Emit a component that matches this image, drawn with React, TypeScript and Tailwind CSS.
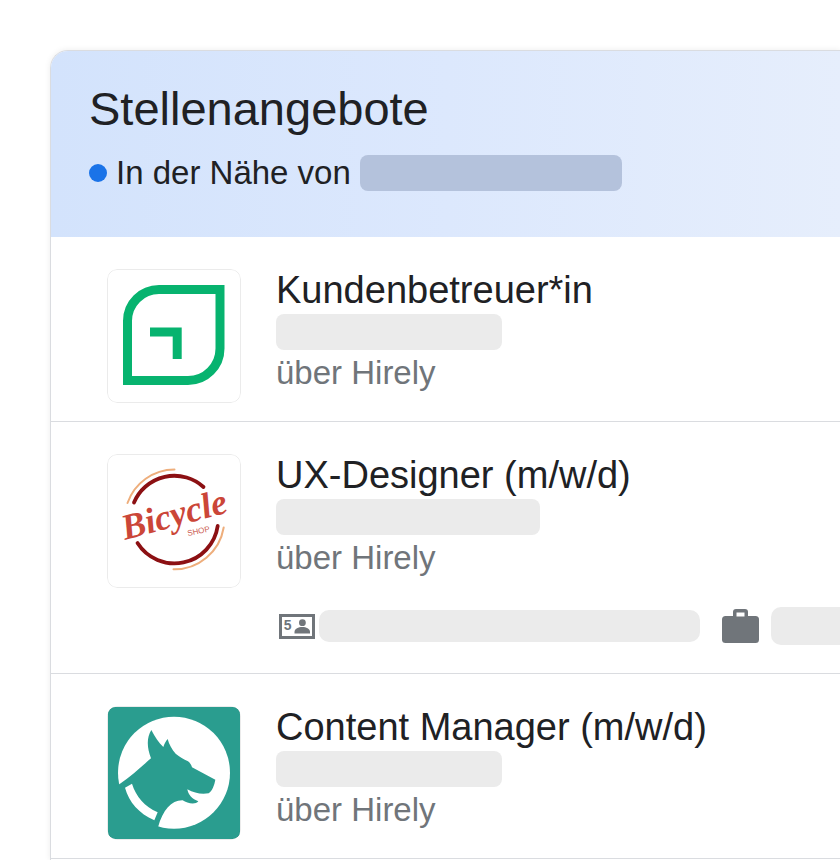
import type { ReactNode } from "react";

interface Job {
  title: string;
  source: string;
  companyWidth: string;
  logo: ReactNode;
  hasDetails?: boolean;
}

function LeafLogo() {
  return (
    <svg viewBox="0 0 134 134" className="size-full" fill="none" stroke="#07b36f" strokeWidth="9" aria-hidden="true">
      <path d="M113 20.5H52A31.5 31.5 0 0 0 20.5 52V111.5H81A32 32 0 0 0 113 79.5Z" />
      <path d="M43 63H70.2V90" />
    </svg>
  );
}

function BicycleLogo() {
  return (
    <svg viewBox="0 0 134 134" className="size-full" fill="none" strokeLinecap="round" aria-hidden="true">
      <g stroke="#8c1013" strokeWidth="3.8">
        <path d="M27 48.5A43.7 43.7 0 0 1 96.5 33" />
        <path d="M30.5 89A43.7 43.7 0 0 0 110.7 72" />
      </g>
      <g stroke="#eeae7c" strokeWidth="2">
        <path d="M20.5 49A50 50 0 0 1 67.5 15.5" />
        <path d="M66.5 115.3A50 50 0 0 0 116.7 73.5" />
      </g>
      <text
        transform="translate(18 86) rotate(-15)"
        className="font-['Liberation_Serif',serif] text-[36px] font-bold italic"
        fill="#cb4638"
      >
        Bicycle
      </text>
      <text
        transform="translate(81 82) rotate(-12)"
        className="font-['Liberation_Sans',sans-serif] text-[8px]"
        fill="#cb5a50"
      >
        SHOP
      </text>
    </svg>
  );
}

function DogLogo() {
  return (
    <svg viewBox="36 33 402 402" className="size-full" aria-hidden="true">
      <rect x="39" y="36" width="396" height="396" rx="22" fill="#2a9d8f" />
      <circle cx="237" cy="233" r="168" fill="#fff" />
      <path
        fill="#2a9d8f"
        d="M60 275L75 266C108 244 136 218 168 190C156 158 154 130 169 105C180 126 191 143 205 156C208 147 212 139 218 132C222 148 231 164 242 176C254 186 266 193 279 199C286 204 289 210 291 217L361 254C358 271 352 287 341 295C318 299 298 294 277 283C279 298 292 313 310 319C302 330 277 326 263 316C230 315 204 344 189 397L185 420H60Z"
      />
      <path fill="#fff" d="M90 278L111 266C123 305 149 334 188 352L178 376C132 355 102 322 90 278Z" />
    </svg>
  );
}

function ContactCardIcon() {
  return (
    <svg viewBox="0 0 36 25" className="ml-[3px] h-[25px] w-9 shrink-0" aria-hidden="true">
      <rect x="1.5" y="1.5" width="33" height="22" fill="#fff" stroke="#70757a" strokeWidth="3" />
      <path d="M15.5 19.5V18C15.5 14.5 19.5 13 23.3 13S31 14.5 31 18V19.5Z" fill="#70757a" />
      <circle cx="23.4" cy="8.7" r="3.4" fill="#70757a" />
      <text x="4.8" y="16" className="font-['Liberation_Sans',sans-serif] text-[14px] font-bold" fill="#70757a">
        5
      </text>
    </svg>
  );
}

function BriefcaseIcon() {
  return (
    <svg viewBox="0 0 37 34" className="h-[34px] w-[37px] shrink-0" fill="#70757a" aria-hidden="true">
      <rect y="7" width="37" height="27" rx="3.5" />
      <path d="M14 0H23Q26 0 26 3V9H11V3Q11 0 14 0Z" />
      <path d="M14.5 3.5H22.5V7.5H14.5Z" fill="#fff" />
    </svg>
  );
}

const jobs: Job[] = [
  {
    title: "Kundenbetreuer*in",
    source: "über Hirely",
    companyWidth: "w-[226px]",
    logo: <LeafLogo />,
  },
  {
    title: "UX-Designer (m/w/d)",
    source: "über Hirely",
    companyWidth: "w-[264px]",
    logo: <BicycleLogo />,
    hasDetails: true,
  },
  {
    title: "Content Manager (m/w/d)",
    source: "über Hirely",
    companyWidth: "w-[226px]",
    logo: <DogLogo />,
  },
];

function JobRow({ job }: { job: Job }) {
  return (
    <li className="flex gap-[35px] border-b border-[#dadce0] pt-8 pb-[18px] pl-14">
      <div className="relative size-[134px] shrink-0 overflow-hidden rounded-[10px]">
        {job.logo}
        <div className="absolute inset-0 rounded-[10px] border border-black/8" />
      </div>
      <div className="flex min-w-0 flex-1 flex-col gap-[3px]">
        <h2 className="text-[38px] leading-[42px] whitespace-nowrap text-[#202124]">{job.title}</h2>
        <div className={`h-9 rounded-lg bg-[#ebebeb] ${job.companyWidth}`} />
        <p className="text-[33px] leading-10 text-[#70757a]">{job.source}</p>
        {job.hasDetails && (
          <div className="mt-[26px] mb-2.5 flex h-[38px] items-center">
            <ContactCardIcon />
            <div className="ml-1 h-8 w-[381px] shrink-0 rounded-[10px] bg-[#ebebeb]" />
            <div className="ml-[22px] flex flex-1 items-center gap-3">
              <BriefcaseIcon />
              <div className="h-[38px] flex-1 rounded-l-[10px] bg-[#ebebeb]" />
            </div>
          </div>
        )}
      </div>
    </li>
  );
}

export default function App() {
  return (
    <main className="flex min-h-screen flex-col overflow-hidden bg-white pt-[50px] pl-[50px] font-['Liberation_Sans',Arial,sans-serif]">
      <section className="flex-1 overflow-hidden rounded-tl-[18px] border-t border-l border-[#dadce0] shadow-[0_0_6px_rgba(0,0,0,0.08)]">
        <header className="bg-linear-to-r from-[#d3e3fc] via-[#dce8fd] to-[#e6eefc] px-[38px] pt-[30px] pb-11">
          <h1 className="text-[47px] leading-14 text-[#202124]">Stellenangebote</h1>
          <div className="mt-4 flex items-center gap-[9px]">
            <span className="size-[18px] rounded-full bg-[#1a73e8]" />
            <p className="text-[33px] leading-10 whitespace-nowrap text-[#202124]">In der Nähe von</p>
            <div className="h-9 w-[262px] rounded-lg bg-[#b4c2dc]" />
          </div>
        </header>
        <ul>
          {jobs.map((job) => (
            <JobRow key={job.title} job={job} />
          ))}
        </ul>
      </section>
    </main>
  );
}
